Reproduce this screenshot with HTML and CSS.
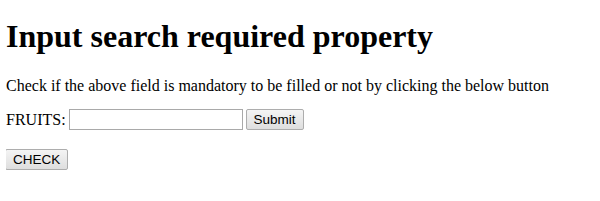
FILE: index.html
```html
<!DOCTYPE html>
<html lang="en">

<head>
    <meta charset="UTF-8">
    <title>Input search required property</title>
    <link rel="stylesheet" href="styles.css">
</head>

<body>
    <h1 class="title">Input search required property</h1>
    <p class="message">Check if the above field is mandatory to be filled or not by clicking the below button</p>
    <form class="form" action="#">
        <label for="fruits">FRUITS:</label>
        <input type="search" id="fruits" name="fruits" class="input" required>
        <input type="submit" class="btn" value="Submit">
    </form>
    <button class="btn check" type="button">CHECK</button>
</body>

</html>
```

FILE: styles.css
```css
body {
    margin: 8px 6px;
    font-family: "Liberation Serif", "Times New Roman", serif;
    font-size: 16px;
    color: #000;
    background: #fff;
}

.title {
    font-size: 32px;
    font-weight: bold;
    margin: 10px 0 22px;
}

.message {
    margin: 0 0 14px;
}

.form {
    display: flex;
    align-items: center;
    gap: 3px;
    margin-bottom: 19px;
}

.input {
    box-sizing: border-box;
    width: 174px;
    height: 21px;
    padding: 1px;
    border: 1px solid #a9a9a9;
    font-size: 13px;
}

.btn {
    font-family: "Liberation Sans", Arial, sans-serif;
    font-size: 13.5px;
    color: #000;
    height: 21px;
    padding: 0 7px;
    border: 1px solid #adadad;
    border-radius: 2px;
    background: linear-gradient(#f4f4f4, #dedede);
}

.check {
    display: block;
    margin-left: -1px;
}
```
